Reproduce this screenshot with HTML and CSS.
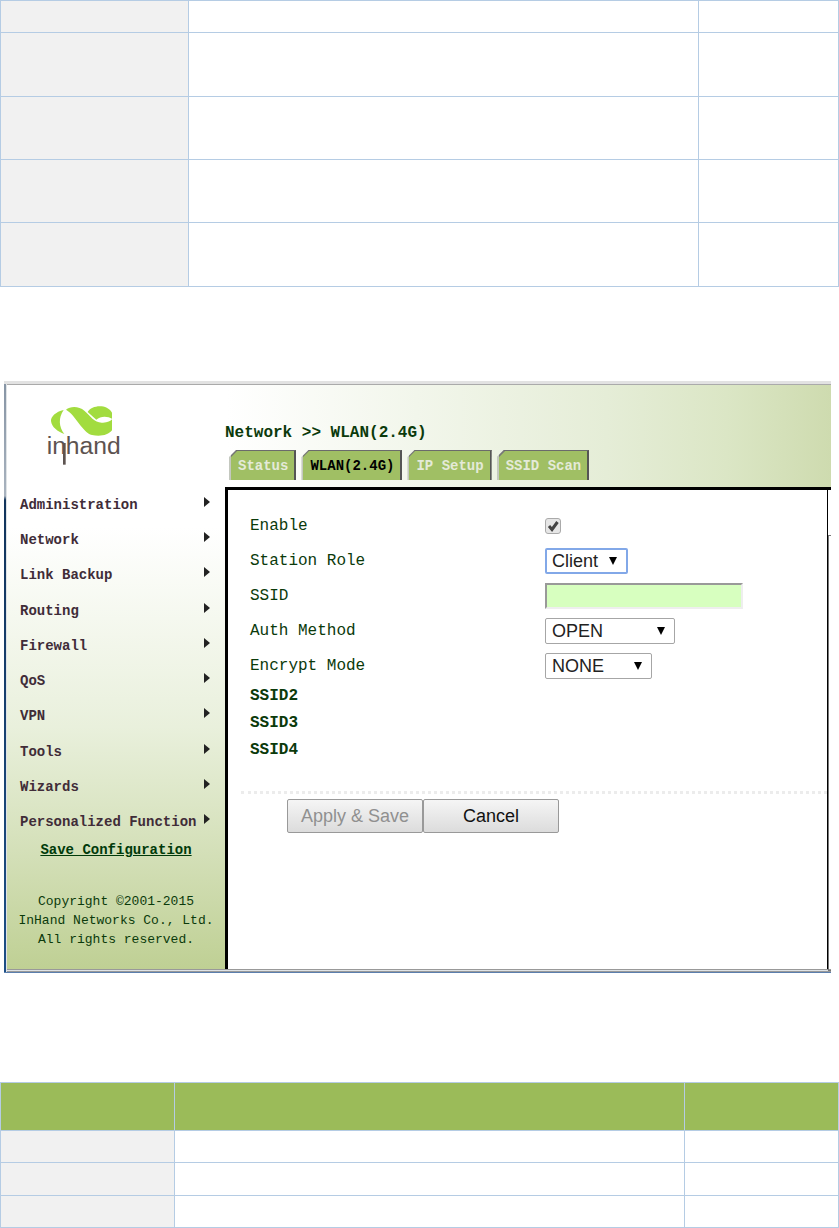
FILE: index.html
```
<!DOCTYPE html>
<html lang="en">
<head>
    <meta charset="UTF-8">
    <meta name="viewport" content="width=device-width, initial-scale=1.0">
    <title>Network - WLAN(2.4G)</title>
    <link rel="stylesheet" href="styles.css">
</head>
<body>
    <table class="params params-top">
        <colgroup><col class="col-name"><col><col class="col-default"></colgroup>
        <tr class="short"><td></td><td></td><td></td></tr>
        <tr class="tall"><td></td><td></td><td></td></tr>
        <tr><td></td><td></td><td></td></tr>
        <tr><td></td><td></td><td></td></tr>
        <tr class="tall"><td></td><td></td><td></td></tr>
    </table>

    <div class="window">
        <header class="header">
            <div class="logo">
                <svg width="80" height="64" viewBox="0 0 240 192" role="img" aria-label="inhand">
                    <g fill="#a2dc3f">
                        <path d="M56 21 C32 26 17 42 18 54 C20 72 38 86 58 93 C41 72 40 44 56 21Z"/>
                        <path d="M63 20 C76 9 102 9 118 23 C136 39 148 58 170 59 C186 60 197 55 201 49 V82 C190 96 166 102 141 96 C112 88 92 36 63 20Z"/>
                        <path d="M128 27 C140 6 186 2 201 29 V47 C189 39 166 38 154 50Z"/>
                    </g>
                    <text class="logo-text" x="5" y="152">inhand</text>
                    <rect x="54" y="120" width="8" height="65" fill="#5d5350"/>
                </svg>
            </div>
            <div class="heading">
                <h1>Network &gt;&gt; WLAN(2.4G)</h1>
                <nav class="tabs">
                    <button type="button" class="tab">Status</button>
                    <button type="button" class="tab active">WLAN(2.4G)</button>
                    <button type="button" class="tab">IP Setup</button>
                    <button type="button" class="tab">SSID Scan</button>
                </nav>
            </div>
        </header>

        <div class="main">
            <aside class="sidebar">
                <ul class="menu">
                    <li><a href="#">Administration</a></li>
                    <li><a href="#">Network</a></li>
                    <li><a href="#">Link Backup</a></li>
                    <li><a href="#">Routing</a></li>
                    <li><a href="#">Firewall</a></li>
                    <li><a href="#">QoS</a></li>
                    <li><a href="#">VPN</a></li>
                    <li><a href="#">Tools</a></li>
                    <li><a href="#">Wizards</a></li>
                    <li><a href="#">Personalized Function</a></li>
                </ul>
                <a class="save-config" href="#">Save Configuration</a>
                <p class="copyright">Copyright ©2001-2015<br>InHand Networks Co., Ltd.<br>All rights reserved.</p>
            </aside>

            <form class="panel">
                <div class="row">
                    <label for="enable">Enable</label>
                    <input type="checkbox" id="enable" name="enable" checked>
                </div>
                <div class="row">
                    <label for="role">Station Role</label>
                    <select id="role" name="role" class="role">
                        <option>Client</option>
                        <option>AP</option>
                    </select>
                </div>
                <div class="row">
                    <label for="ssid">SSID</label>
                    <input type="text" id="ssid" name="ssid">
                </div>
                <div class="row">
                    <label for="auth">Auth Method</label>
                    <select id="auth" name="auth" class="auth">
                        <option>OPEN</option>
                        <option>SHARED</option>
                    </select>
                </div>
                <div class="row">
                    <label for="encrypt">Encrypt Mode</label>
                    <select id="encrypt" name="encrypt" class="encrypt">
                        <option>NONE</option>
                        <option>WEP</option>
                    </select>
                </div>
                <h2>SSID2</h2>
                <h2>SSID3</h2>
                <h2>SSID4</h2>
                <div class="buttons">
                    <button type="submit" disabled>Apply &amp; Save</button>
                    <button type="reset">Cancel</button>
                </div>
            </form>
            <div class="side-strip"></div>
        </div>
    </div>

    <table class="params params-bottom">
        <colgroup><col class="col-name"><col><col class="col-default"></colgroup>
        <tr><th></th><th></th><th></th></tr>
        <tr><td></td><td></td><td></td></tr>
        <tr class="tall"><td></td><td></td><td></td></tr>
        <tr><td></td><td></td><td></td></tr>
    </table>
</body>
</html>
```
FILE: styles.css
```
* {
    box-sizing: border-box;
    margin: 0;
    padding: 0;
}
body {
    background-color: #fff;
    color: #0b3a0b;
    font-family: "Liberation Mono", monospace;
}

/* parameter tables */
.params {
    width: 100%;
    table-layout: fixed;
    border-collapse: collapse;
}
.params th,
.params td {
    border: 1px solid #b5cce4;
}
.params td:first-child {
    background-color: #f1f1f1;
}
.params th {
    background-color: #9bbb59;
    height: 48px;
}
.params-top td {
    height: 63px;
}
.params-top .tall td {
    height: 64px;
}
.params-top .short td {
    height: 32px;
}
.params-top .col-name {
    width: 188px;
}
.params-top .col-default {
    width: 140px;
}
.params-bottom td {
    height: 32px;
}
.params-bottom .tall td {
    height: 33px;
}
.params-bottom .col-name {
    width: 174px;
}
.params-bottom .col-default {
    width: 154px;
}

/* browser window */
.window {
    margin: 94px 8px 109px 4px;
    padding-left: 3px;
    border-top: 3px solid #e2e2e2;
    border-bottom: 1px solid #5b7fae;
    background: linear-gradient(#8795a5, #a9b3bf 112px, #12345c 116px, #1d4f86) left / 2px 100% no-repeat #dfe3e6;
}
.header {
    display: flex;
    border-top: 1px solid #aaa;
    background: linear-gradient(90deg, #fff 220px, #e5edd7 600px, #dbe6c5 720px, #cedbaf);
}
.logo {
    width: 218px;
    padding: 18px 0 0 38px;
}
.logo svg {
    display: block;
}
.logo-text {
    font-family: "Liberation Sans", Arial, sans-serif;
    font-size: 74px;
    fill: #5d5350;
}
.heading {
    flex: 1;
    padding: 36px 0 7px;
}
h1 {
    font-size: 16px;
    line-height: 24px;
}
.tabs {
    display: flex;
    gap: 5px;
    margin: 5px 0 0 4px;
}
.tab {
    height: 30px;
    padding: 0 6px 0 7px;
    border: solid;
    border-width: 1px 2px 0;
    border-color: #6b6b6b #555 #555 #c4c8bf;
    background: linear-gradient(135deg, #777 6px, #a0bf64 7px) border-box;
    clip-path: polygon(0 7px, 7px 0, 100% 0, 100% 100%, 0 100%);
    color: #e4ead8;
    font: bold 14px "Liberation Mono", monospace;
}
.tab.active {
    color: #000;
}

.main {
    display: flex;
    border-bottom: 3px double #999;
}
.sidebar {
    width: 218px;
    padding-bottom: 20px;
    background: linear-gradient(#fff 40px, #e9f0dc 240px, #d3dfb7 370px, #bfd094);
    text-align: center;
}
.menu {
    display: flex;
    flex-direction: column;
    height: 353px;
    list-style: none;
}
.menu li {
    flex: 1;
}
.menu a {
    display: flex;
    align-items: center;
    justify-content: space-between;
    height: 100%;
    padding: 0 15px 0 13px;
    color: #402c38;
    font-size: 14px;
    font-weight: bold;
    text-decoration: none;
}
.menu a::after {
    content: "";
    margin-bottom: 6px;
    border: solid transparent;
    border-width: 5px 0 5px 6px;
    border-left-color: #222;
}
.save-config {
    display: block;
    color: #003a0a;
    font-size: 14px;
    font-weight: bold;
    line-height: 20px;
}
.copyright {
    margin-top: 32px;
    font-size: 13px;
    line-height: 19px;
}

/* settings form */
.panel {
    flex: 1;
    padding: 18px 0 0 13px;
    border: solid #000;
    border-width: 3px 1px 0 3px;
    background-color: #fff;
}
.row {
    display: flex;
    align-items: center;
    height: 35px;
    padding-left: 9px;
}
.row label {
    width: 295px;
    font-size: 16px;
}
.row select {
    height: 26px;
    padding-left: 6px;
    border: 1px solid #a6a6a6;
    border-radius: 2px;
    appearance: none;
    background: url("data:image/svg+xml,%3Csvg xmlns='http://www.w3.org/2000/svg' width='8' height='8'%3E%3Cpath d='M0 0h8L4 8z'/%3E%3C/svg%3E") right 9px center no-repeat #fff;
    color: #222;
    font: 18px "Liberation Sans", Arial, sans-serif;
}
.row .role {
    width: 83px;
    border: 2px solid #82a8e8;
    padding-left: 5px;
}
.row .auth {
    width: 130px;
}
.row .encrypt {
    width: 107px;
}
.row input[type="text"] {
    width: 198px;
    height: 26px;
    border: 2px solid;
    border-color: #999 #eee #eee #999;
    background-color: #d7ffbf;
    font: 18px "Liberation Sans", Arial, sans-serif;
}
.row input[type="checkbox"] {
    width: 16px;
    height: 16px;
    border: 1px solid #aaa;
    border-radius: 3px;
    appearance: none;
    background-color: #e6e6e6;
}
.row input[type="checkbox"]:checked {
    background-image: url("data:image/svg+xml,%3Csvg xmlns='http://www.w3.org/2000/svg' width='14' height='14'%3E%3Cpath d='M3 7l3 3.500L11.500 3' fill='none' stroke='%23444' stroke-width='3'/%3E%3C/svg%3E");
}
h2 {
    padding-left: 9px;
    font-size: 16px;
    line-height: 27px;
}
.buttons {
    display: flex;
    margin-top: 27px;
    padding: 5px 0 0 46px;
    border-top: 3px dotted #ececec;
}
.buttons button {
    width: 136px;
    height: 34px;
    border: 1px solid #999;
    border-radius: 2px;
    background: linear-gradient(#f5f5f5, #dcdcdc);
    color: #111;
    font: 18px "Liberation Sans", Arial, sans-serif;
}
.buttons button:disabled {
    color: #909090;
}
.side-strip {
    width: 3px;
    padding-top: 45px;
    border-top: 3px solid #000;
    background-color: #fff;
}
.side-strip::before {
    content: "";
    display: block;
    height: 100%;
    border: 1px solid #777;
    border-right: none;
}
```
